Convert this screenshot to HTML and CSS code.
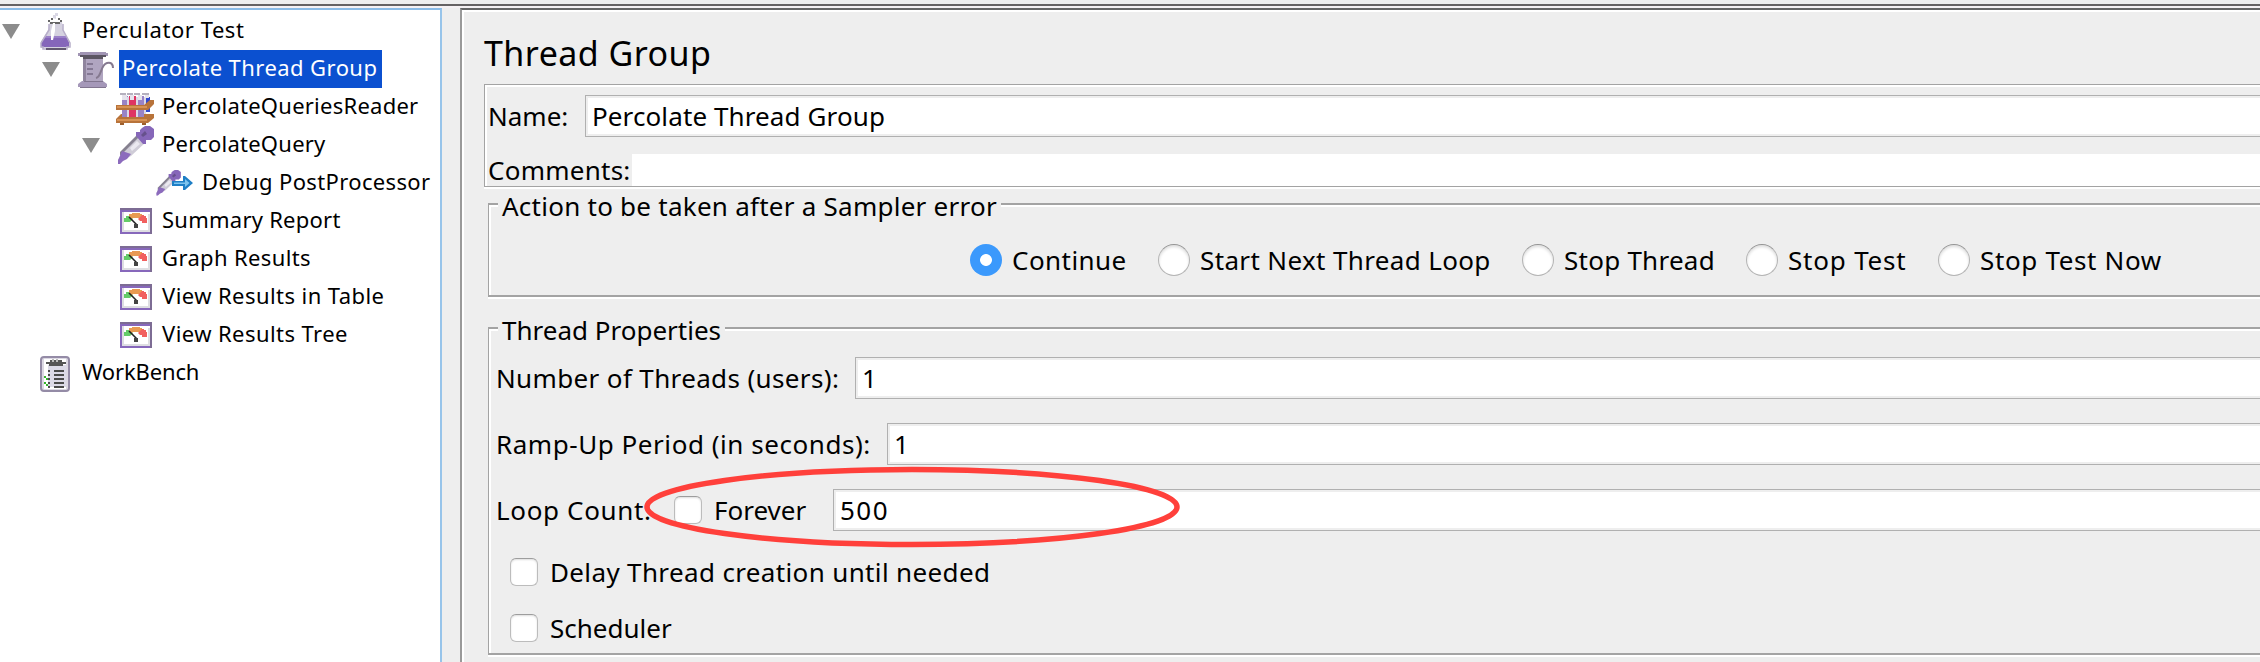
FILE: index.html
```
<!DOCTYPE html>
<html lang="en">
<head>
<meta charset="utf-8">
<title>Thread Group</title>
<link rel="stylesheet" href="styles.css">
</head>
<body>
<svg class="defs" aria-hidden="true">
  <symbol id="gauge" viewBox="0 0 42 38">
    <rect x="4" y="6" width="32" height="26" fill="#8768bb"/>
    <path d="M4 6H36V32H34V8H4z" fill="#7d6c94"/>
    <rect x="6" y="10" width="28" height="20" fill="#fff"/>
    <path d="M6 10h2v20h-2zM32 12h2v18H6v-2h26z" fill="#dedee2"/>
    <path d="M8 20v-4h2v-2h4l3 3-3 3z" fill="#65cc68"/>
    <path d="M13 14v-2h3v-1h8v1h2v5h-3v-1h-6l-2 1z" fill="#e99a52"/>
    <path d="M22 17l4-4h2v1h2v2h1v5h-5v-2h-2z" fill="#f1605f"/>
    <path d="M13 15l8 8" stroke="#222" stroke-width="1.6" fill="none"/>
    <rect x="18" y="22" width="4" height="4" fill="#444"/>
  </symbol>
  <symbol id="flask" viewBox="0 0 42 38">
    <path d="M17 6v-3h2V1h3v3h-2v3z" fill="#d9d7e4"/>
    <path d="M14 10h12l1 8 6 12v6H5v-6l7-12z" fill="#d5d2e0"/>
    <path d="M10 24h20l3 6v5H5v-5z" fill="#8566ba"/>
    <path d="M10 24h20l1 2H9z" fill="#9a80c8"/>
    <path d="M12 8h2v2h-2zM24 8h2v2h-2zM14 10h10v2H14zM15 6h2v2h-2zM22 6h2v2h-2z" fill="#666"/>
    <path d="M17 11h2v8l-2 9h-2v-9z" fill="#fff"/>
    <path d="M13 12v6l-8 13v4h2v2h24v-2h3v-4l-7-13v-6" fill="none" stroke="#b7aec9" stroke-width="1.5"/>
    <path d="M10 36h20v2H10z" fill="#625970"/>
  </symbol>
  <symbol id="beaker" viewBox="0 0 42 38">
    <path d="M7 7h20v25H7z" fill="#b0a5c0"/>
    <path d="M7 7h3v25H7z" fill="#8f849d"/>
    <path d="M2 34l4-3h21l4 3v3H2z" fill="#a598b9"/>
    <path d="M4 37h26v1H4zM8 31h19v1H8z" fill="#81758f"/>
    <path d="M2 3h2V2h26v1h2v3H2z" fill="#a195b4"/>
    <path d="M4 5h26v2h-3v2H7V7H4z" fill="#5c5663"/>
    <path d="M11 14h6M11 19h6M11 24h6" stroke="#756984" stroke-width="1.6"/>
    <path d="M20 28c6-1 4-13 11-15 4-1 6 1 6 5" fill="none" stroke="#85798f" stroke-width="2"/>
  </symbol>
  <symbol id="rack" viewBox="0 0 42 38">
    <path d="M5 26h33v4l-6 5H0v-4z" fill="#b8733a"/>
    <path d="M6 8h6v21H6zM22 8h6v21h-6z" fill="#9983c6"/>
    <path d="M13 8h7v21h-7z" fill="#df3463"/>
    <path d="M30 9h4v15h-4z" fill="#3148cf"/>
    <path d="M20 9h2v20h-2zM28 9h2v17h-2zM11 9h2v20h-2z" fill="#dcd9e6"/>
    <path d="M4 5h6v2H4zM11 5h6v2h-6zM18 5h6v2h-6zM26 5h7v2h-7z" fill="#b5b0be"/>
    <path d="M6 7h5v5H6zM14 7h4v5h-4zM22 7h4v5h-4zM29 7h4v3h-4z" fill="#e5e3ec"/>
    <path d="M0 17h28l6-5h4v4l-6 6H0z" fill="#b8733a"/>
    <path d="M1 18h30v2H1zM1 31h30v2H1z" fill="#d79254"/>
    <path d="M4 35h4v2H4zM26 35h4v2h-4z" fill="#9d5f2c"/>
  </symbol>
  <symbol id="dropper" viewBox="0 0 42 38">
    <path d="M22 9l8 7-15 14-7 4-6 1 3-8z" fill="#cfccd7"/>
    <path d="M21 9l2 2L8 26l-4 4v-4z" fill="#85808f"/>
    <path d="M6 25l9 3-4 5-4 2-3 3H2v-4l2-4z" fill="#8c6bbd"/>
    <path d="M14 22l7-7 3 3-8 7z" fill="#ebe9f0"/>
    <path d="M20 6h4V4l2-2 3-2h5l4 3v8l-3 3h-5v4h-3l-7-8z" fill="#8667b9"/>
    <path d="M25 9l4-4 2 3-4 3z" fill="#66518c"/>
  </symbol>
  <symbol id="debug" viewBox="0 0 42 38">
    <use href="#dropper" transform="translate(-1 6) scale(.68)"/>
    <path d="M16 17h11v-5h2l8 7-8 7h-2v-4H16z" fill="#1e7fc6"/>
    <path d="M18 18.500h11v-3.500l4.500 4-4.500 4v-3H18z" fill="#7cc4ef"/>
  </symbol>
  <symbol id="clipboard" viewBox="0 0 42 38">
    <rect x="5" y="3" width="28" height="34" rx="3" fill="#dcd8e3" stroke="#948ba6" stroke-width="2"/>
    <path d="M8 5h22v30H8z" fill="#fff"/>
    <path d="M12 11h18v22H12z" fill="#dcdae7"/>
    <path d="M10 8h4V6h12v2h4v2h-3v2H13v-2h-3z" fill="#555"/>
    <path d="M16 5h2v3h-2zM20 5h2v3h-2z" fill="#bbb"/>
    <path d="M18 17h10M18 21h10M18 25h10M18 29h10M18 33h10M12 17h2M12 21h2M12 25h2M12 29h2M12 33h2" stroke="#4b4b4b" stroke-width="2"/>
    <path d="M8 22h2v2h2v2h-2v-2H8zM8 28h2v2h2v2h-2v-2H8z" fill="#35b52b"/>
  </symbol>
</svg>
<div class="app">
  <div class="toolbar-edge"></div>
  <div class="main">
    <nav class="tree">
      <div class="node d0"><i class="tri"></i><svg class="ico"><use href="#flask"/></svg><span class="label w5">Perculator Test</span></div>
      <div class="node d1"><i class="tri"></i><svg class="ico"><use href="#beaker"/></svg><span class="label w4 selected">Percolate Thread Group</span></div>
      <div class="node d2"><i class="tri leaf"></i><svg class="ico"><use href="#rack"/></svg><span class="label w2">PercolateQueriesReader</span></div>
      <div class="node d2"><i class="tri"></i><svg class="ico"><use href="#dropper"/></svg><span class="label w2">PercolateQuery</span></div>
      <div class="node d3"><i class="tri leaf"></i><svg class="ico"><use href="#debug"/></svg><span class="label w3">Debug PostProcessor</span></div>
      <div class="node d2"><i class="tri leaf"></i><svg class="ico"><use href="#gauge"/></svg><span class="label w2">Summary Report</span></div>
      <div class="node d2"><i class="tri leaf"></i><svg class="ico"><use href="#gauge"/></svg><span class="label w3">Graph Results</span></div>
      <div class="node d2"><i class="tri leaf"></i><svg class="ico"><use href="#gauge"/></svg><span class="label w4">View Results in Table</span></div>
      <div class="node d2"><i class="tri leaf"></i><svg class="ico"><use href="#gauge"/></svg><span class="label w4">View Results Tree</span></div>
      <div class="node d0"><i class="tri leaf"></i><svg class="ico"><use href="#clipboard"/></svg><span class="label n2">WorkBench</span></div>
    </nav>
    <main class="panel">
      <h1 class="title">Thread Group</h1>
      <section class="names">
        <div class="row name-row"><label>Name:</label><div class="field w1">Percolate Thread Group</div></div>
        <div class="row comment-row"><label class="w2">Comments:</label><div class="plain-field"></div></div>
      </section>
      <section class="box action">
        <div class="legend"><i class="stub"></i><span class="legend-text w2">Action to be taken after a Sampler error</span><i class="rule"></i></div>
        <div class="radios">
          <label class="opt continue"><i class="radio on"></i>Continue</label>
          <label class="opt next w3"><i class="radio"></i>Start Next Thread Loop</label>
          <label class="opt thread w2"><i class="radio"></i>Stop Thread</label>
          <label class="opt test w7"><i class="radio"></i>Stop Test</label>
          <label class="opt w6"><i class="radio"></i>Stop Test Now</label>
        </div>
      </section>
      <section class="box props">
        <div class="legend"><i class="stub"></i><span class="legend-text">Thread Properties</span><i class="rule"></i></div>
        <div class="rows">
          <div class="row"><label class="threads w3">Number of Threads (users):</label><div class="field">1</div></div>
          <div class="row"><label class="ramp w5">Ramp-Up Period (in seconds):</label><div class="field">1</div></div>
          <div class="row loop"><label class="count w6">Loop Count:</label><label class="opt forever"><i class="check"></i>Forever</label><div class="field w15">500</div>
            <svg class="mark" viewBox="0 0 540 86"><ellipse cx="270" cy="43" rx="265" ry="37.500" fill="none" stroke="#ff403b" stroke-width="5.500"/></svg>
          </div>
        </div>
        <div class="checks">
          <label class="opt w3"><i class="check"></i>Delay Thread creation until needed</label>
          <label class="opt"><i class="check"></i>Scheduler</label>
        </div>
      </section>
    </main>
  </div>
</div>
</body>
</html>
```
FILE: styles.css
```
* { box-sizing: border-box; }
body {
  margin: 0;
  background: #eee;
  color: #000;
  font-family: "Noto Sans", "Open Sans", sans-serif;
  overflow: hidden;
}
.defs { display: none; }
.app { display: flex; flex-direction: column; height: 662px; overflow: hidden; }
.toolbar-edge {
  flex: none;
  height: 8px;
  border-bottom: 2px solid #f5f1f3;
  background: linear-gradient(#eee 4px, #656263 4px);
}
.main { display: flex; flex: 1; gap: 18px; min-height: 0; }

/* letter spacing */
.n2 { letter-spacing: -.15px; }
.w1 { letter-spacing: .11px; }
.w2 { letter-spacing: .25px; }
.w3 { letter-spacing: .36px; }
.w4 { letter-spacing: .43px; }
.w5 { letter-spacing: .55px; }
.w6 { letter-spacing: .65px; }
.w7 { letter-spacing: .8px; }
.w15 { letter-spacing: 1.5px; }

/* tree */
.tree {
  flex: none;
  width: 442px;
  padding-top: 2px;
  border-top: 2px solid #8abbe6;
  border-right: 2px solid #97c4ea;
  background: #fff;
  font-size: 22px;
}
.node { display: flex; height: 38px; }
.d0 { padding-left: 2px; }
.d1 { padding-left: 42px; }
.d2 { padding-left: 82px; }
.d3 { padding-left: 122px; }
.tri {
  flex: none;
  width: 18px;
  height: 15px;
  margin: 12px 16px 0 0;
  background: #8c8c8c;
  clip-path: polygon(0 0, 100% 0, 50% 100%);
}
.leaf { visibility: hidden; }
.ico { flex: none; width: 42px; height: 38px; margin-right: 1px; }
.label { height: 38px; padding: 0 6px 3px 3px; line-height: 35px; white-space: nowrap; }
.selected { width: 263px; background: #0b50d0; color: #fff; }

/* right panel */
.panel {
  flex: 1;
  min-width: 0;
  padding-left: 22px;
  border-top: 2px solid #656565;
  border-left: 2px solid #999;
  box-shadow: inset 2px 2px #fff;
  font-size: 26px;
}
.title {
  margin: 0;
  padding-top: 12px;
  height: 74px;
  font-size: 34px;
  font-weight: 400;
  line-height: 62px;
  letter-spacing: .45px;
}
.names {
  height: 103px;
  padding: 10px 0 0 3px;
  border: solid #a3a3a3;
  border-width: 1px 0 1px 1px;
  box-shadow: inset 2px 2px #fff, 0 2px #fff;
}
.row { display: flex; height: 42px; line-height: 42px; white-space: nowrap; }
.name-row label { width: 97px; }
.comment-row { height: 32px; margin-top: 17px; line-height: 32px; }
.comment-row label { width: 144px; }
.plain-field { flex: 1; background: #fff; }
.field {
  flex: 1;
  padding-left: 6px;
  border: 1px solid #b0b0b0;
  border-right: 0;
  background: #fff;
  box-shadow: inset 2px 2px #eee, inset 0 -2px #eee;
  line-height: 40px;
}

.box {
  margin-left: 4px;
  border-left: 1px solid #a3a3a3;
  border-bottom: 2px solid #a3a3a3;
  box-shadow: inset 2px 0 #fff, 0 2px #fff;
}
.action { height: 94px; margin-top: 16px; }
.props { height: 328px; margin-top: 30px; }
.legend { display: flex; height: 19px; }
.stub, .rule { height: 4px; border-top: 2px solid #a3a3a3; background: #fff; }
.stub { width: 9px; }
.rule { flex: 1; }
.legend-text { margin-top: -13px; padding: 0 4px; line-height: 32px; white-space: nowrap; }
.radios { display: flex; padding: 2px 0 0 481px; }
.opt { display: flex; align-items: center; white-space: nowrap; }
.radios .opt { height: 72px; gap: 10px; }
.continue { width: 188px; letter-spacing: .45px; }
.next { width: 364px; }
.thread { width: 224px; }
.test { width: 192px; }
.radio {
  flex: none;
  width: 32px;
  height: 32px;
  border: 1px solid #b4b4b4;
  border-top-color: #949494;
  border-radius: 50%;
  background: #fff;
  box-shadow: inset 0 2px 3px #ddd;
}
.radio.on {
  border: 0;
  background: radial-gradient(circle, #fff 5.5px, #3b99fc 6.3px);
  box-shadow: none;
}
.rows { display: flex; flex-direction: column; gap: 24px; padding: 11px 0 0 7px; }
.threads { width: 359px; }
.ramp { width: 391px; }
.loop { position: relative; }
.count { width: 178px; }
.check {
  flex: none;
  width: 28px;
  height: 28px;
  border: 1px solid #bcbcbc;
  border-top-color: #9d9d9d;
  border-radius: 6px;
  background: #fff;
  box-shadow: inset 0 1px 2px #ddd;
}
.forever { width: 159px; gap: 12px; }
.mark { position: absolute; left: 146px; top: -25px; width: 540px; height: 86px; }
.checks { display: flex; flex-direction: column; gap: 24px; padding: 25px 0 0 21px; }
.checks .opt { height: 32px; gap: 12px; }
```
